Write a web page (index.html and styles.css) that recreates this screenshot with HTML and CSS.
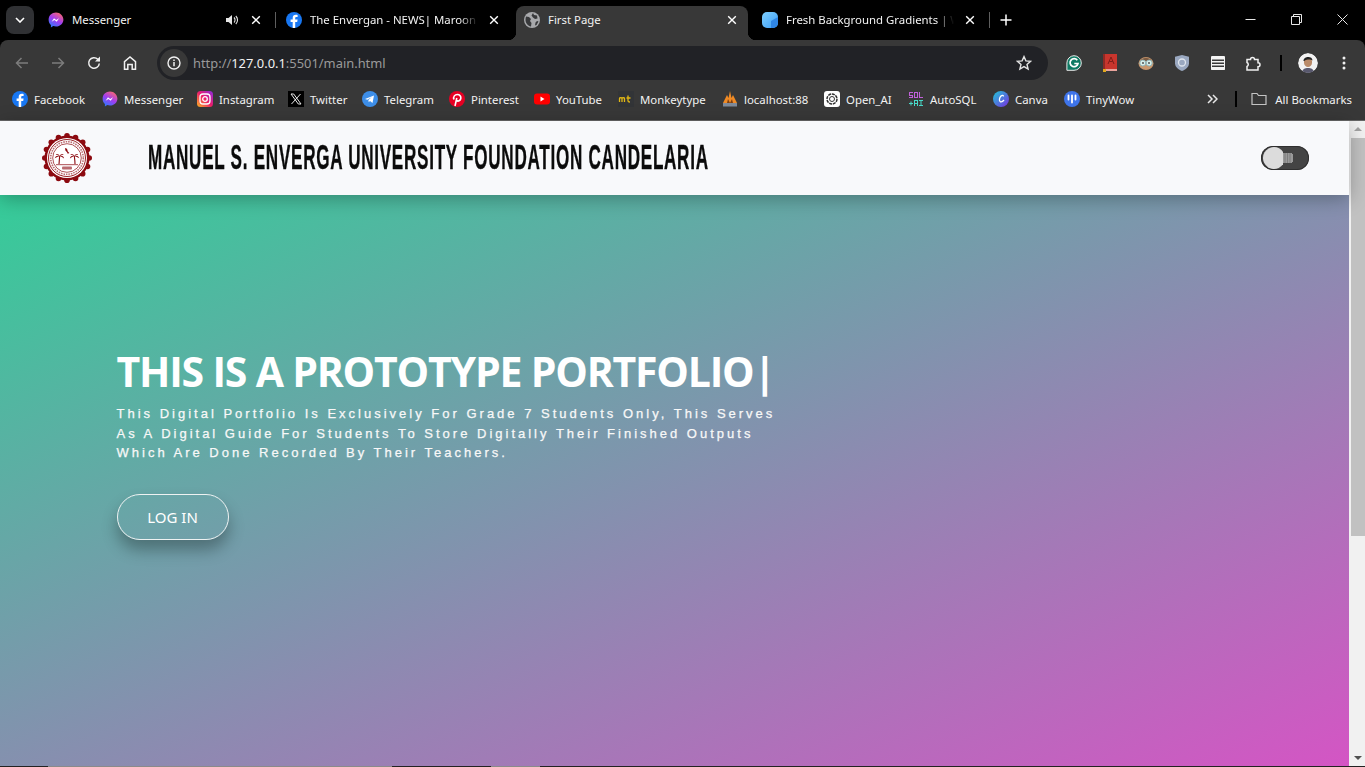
FILE: index.html
```html
<!DOCTYPE html>
<html lang="en">
<head>
<meta charset="utf-8">
<title>First Page</title>
<link rel="stylesheet" href="styles.css">
</head>
<body>
<svg class="defs" width="0" height="0" aria-hidden="true">
  <defs>
    <linearGradient id="mg" x1="0.2" y1="1" x2="0.8" y2="0"><stop offset="0" stop-color="#2b7bff"/><stop offset=".5" stop-color="#a13cf0"/><stop offset="1" stop-color="#ff6a6a"/></linearGradient>
    <linearGradient id="ig" x1="0" y1="1" x2="1" y2="0"><stop offset="0" stop-color="#fdb722"/><stop offset=".5" stop-color="#ec1c6a"/><stop offset="1" stop-color="#8a2be2"/></linearGradient>
    <linearGradient id="cg" x1="0" y1="0" x2="1" y2="1"><stop offset="0" stop-color="#1fc8d8"/><stop offset="1" stop-color="#7a2ee0"/></linearGradient>
    <linearGradient id="fg" x1="0" y1="0" x2="1" y2="1"><stop offset="0" stop-color="#7fd0ff"/><stop offset="1" stop-color="#3b9cf5"/></linearGradient>
    <symbol id="fb" viewBox="0 0 16 16"><circle cx="8" cy="8" r="8" fill="#1877f2"/><path d="M9.200 16V10h2l.4-2.400H9.200V6.200c0-.7.3-1.200 1.300-1.200h1.100V3c-.4-.1-1.100-.2-1.800-.2-1.900 0-3.100 1.100-3.100 3.100v1.700H4.600V10h2.100v6z" fill="#fff"/></symbol>
    <symbol id="ms" viewBox="0 0 16 16"><path d="M8 .6C3.800.6.600 3.700.600 7.700c0 2.100.9 3.900 2.300 5.200v2.500l2.300-1.300c.9.300 1.800.4 2.800.4 4.200 0 7.400-3.100 7.400-6.800S12.200.6 8 .6z" fill="url(#mg)"/><path d="M3.600 9.800 6 6.200l2.200 1.700 2.900-1.700-2.400 3.600-2.200-1.700z" fill="#fff"/></symbol>
  </defs>
</svg>

<div class="tabstrip">
  <button class="tabmenu"><svg width="10" height="6" viewBox="0 0 10 6"><path d="M1 1l4 4 4-4" fill="none" stroke="#fff" stroke-width="1.600"/></svg></button>
  <div class="tabs">
    <div class="tab">
      <svg class="fav"><use href="#ms"/></svg>
      <span class="tab-title">Messenger</span>
      <svg class="speaker" width="14" height="14" viewBox="0 0 14 14"><path d="M1 5h2.500L7 2v10L3.500 9H1z" fill="#e6e6e6"/><path d="M9 4.500a3.500 3.500 0 0 1 0 5M10.800 3a5.500 5.500 0 0 1 0 8" fill="none" stroke="#e6e6e6" stroke-width="1.100"/></svg>
      <svg class="close" width="10" height="10" viewBox="0 0 10 10"><path d="M1.200 1.200l7.600 7.600M8.800 1.200L1.200 8.800" stroke="#fff" stroke-width="1.400"/></svg>
    </div>
    <div class="tab tab-sep">
      <svg class="fav"><use href="#fb"/></svg>
      <span class="tab-title fade">The Envergan - NEWS| Maroon</span>
      <svg class="close" width="10" height="10" viewBox="0 0 10 10"><path d="M1.200 1.200l7.600 7.600M8.800 1.200L1.200 8.800" stroke="#fff" stroke-width="1.400"/></svg>
    </div>
    <div class="tab active">
      <svg class="fav" viewBox="0 0 16 16"><circle cx="8" cy="8" r="8" fill="#a8a9ac"/><path d="M2 4.500l3 .5 2 2-1 2 1.500 2-.5 3.500C4 14 1.500 11 1.500 8c0-1.300.2-2.500.5-3.500zM9 1l1 2 3 .5.500 3-2.500.5-2-1.500-1.500-2zM13 9l1.500.5-2 3.500-1.500.5.500-3z" fill="#38393b"/></svg>
      <span class="tab-title">First Page</span>
      <svg class="close" width="10" height="10" viewBox="0 0 10 10"><path d="M1.200 1.200l7.600 7.600M8.800 1.200L1.200 8.800" stroke="#fff" stroke-width="1.400"/></svg>
    </div>
    <div class="tab">
      <svg class="fav" viewBox="0 0 16 16"><path d="M5 0h6a5 5 0 0 1 5 5v6a5 5 0 0 1-5 5H5a5 5 0 0 1-5-5V5a5 5 0 0 1 5-5z" fill="url(#fg)"/><path d="M16 5v6a5 5 0 0 1-5 5H9V9z" fill="#2f86e6"/></svg>
      <span class="tab-title fade">Fresh Background Gradients | W</span>
      <svg class="close" width="10" height="10" viewBox="0 0 10 10"><path d="M1.200 1.200l7.600 7.600M8.800 1.200L1.200 8.800" stroke="#fff" stroke-width="1.400"/></svg>
    </div>
  </div>
  <span class="strip-sep"></span>
  <svg class="newtab" width="12" height="12" viewBox="0 0 12 12"><path d="M6 .5v11M.5 6h11" stroke="#fff" stroke-width="1.500"/></svg>
  <div class="winctl">
    <svg viewBox="0 0 11 11"><path d="M.5 5.500h10" stroke="#e8e8e8"/></svg>
    <svg viewBox="0 0 11 11"><path d="M.5 2.500h8v8h-8zM2.500 2.500v-2h8v8h-2" fill="none" stroke="#e8e8e8"/></svg>
    <svg viewBox="0 0 11 11"><path d="M.5.500l10 10M10.500.500l-10 10" stroke="#e8e8e8"/></svg>
  </div>
</div>

<div class="toolbar">
  <span class="tbtn"><svg width="16" height="16" viewBox="0 0 16 16"><path d="M14 8H2.500M7.500 3l-5 5 5 5" fill="none" stroke="#7c7c7c" stroke-width="1.500"/></svg></span>
  <span class="tbtn"><svg width="16" height="16" viewBox="0 0 16 16"><path d="M2 8h11.500M8.500 3l5 5-5 5" fill="none" stroke="#7c7c7c" stroke-width="1.500"/></svg></span>
  <span class="tbtn"><svg width="16" height="16" viewBox="0 0 16 16"><path d="M13.300 8.500a5.300 5.300 0 1 1-1.500-4.200L13.500 6" fill="none" stroke="#f0f0f0" stroke-width="1.500"/><path d="M14 1.500V6.500H9z" fill="#f0f0f0"/></svg></span>
  <span class="tbtn"><svg width="16" height="16" viewBox="0 0 16 16"><path d="M2.500 14.300V6.700L8 2l5.500 4.700v7.600h-3.300V9.500H5.800v4.800z" fill="none" stroke="#f0f0f0" stroke-width="1.500"/></svg></span>
  <div class="omnibox">
    <span class="info"><svg width="14" height="14" viewBox="0 0 14 14"><circle cx="7" cy="7" r="6" fill="none" stroke="#f0f0f0" stroke-width="1.400"/><path d="M7 6v4.200M7 3.500v1.400" stroke="#f0f0f0" stroke-width="1.500"/></svg></span>
    <span class="url"><span class="dim">http://</span>127.0.0.1<span class="dim">:5501/main.html</span></span>
    <svg class="star" width="16" height="16" viewBox="0 0 16 16"><path d="M8 1.600l1.900 4.300 4.700.4-3.600 3.100 1.100 4.600L8 11.600l-4.100 2.400L5 9.400 1.400 6.300l4.700-.4z" fill="none" stroke="#e4e4e4" stroke-width="1.400"/></svg>
  </div>
  <span class="tbtn"><svg width="16" height="16" viewBox="0 0 16 16"><path d="M8 .7a7.300 7.300 0 1 1 0 14.600H.9v-7.300A7.300 7.300 0 0 1 8 .7z" fill="#0f7a63" stroke="#e8e8e8"/><path d="M11.300 5.300A4 4 0 1 0 12 8.500H8.300" fill="none" stroke="#fff" stroke-width="1.700"/></svg></span>
  <span class="tbtn"><svg width="14" height="18" viewBox="0 0 14 18"><path d="M2 0h12v15H2z" fill="#c8352d"/><path d="M2 15h12v2H2z" fill="#e9a39c"/><path d="M0 0h2v17H0z" fill="#8e2a25"/><path d="M5 10l3-7 3 7M6.300 7.500h3.400" fill="none" stroke="#7e1d18"/><path d="M0 15h3v3H0z" fill="#e0a81e"/></svg></span>
  <span class="tbtn"><svg width="16" height="16" viewBox="0 0 16 16"><ellipse cx="8" cy="8.500" rx="7.500" ry="6.500" fill="#c9976c"/><path d="M2 5.500Q8 0 14 5.500L8 6z" fill="#7a5a42"/><circle cx="4.800" cy="8" r="3" fill="#d8efe9" stroke="#8fb4b8"/><circle cx="11.200" cy="8" r="3" fill="#d8efe9" stroke="#8fb4b8"/><circle cx="5" cy="8" r=".9" fill="#444"/><circle cx="11" cy="8" r=".9" fill="#444"/></svg></span>
  <span class="tbtn"><svg width="14" height="16" viewBox="0 0 14 16"><path d="M7 0l7 1.800v6.400C14 12 10.500 14.600 7 16 3.500 14.600 0 12 0 8.200V1.800z" fill="#9aa8c0"/><circle cx="7" cy="7.500" r="3.500" fill="none" stroke="#dfe5ee" stroke-width="1.300"/></svg></span>
  <span class="tbtn"><svg width="14" height="14" viewBox="0 0 14 14"><path d="M.5.500h13v13H.5z" fill="none" stroke="#f4f4f4"/><path d="M0 1h14v2.500H0zM0 5h14v1.500H0zM0 8h14v1.500H0zM0 11h14v2.500H0z" fill="#f4f4f4"/></svg></span>
  <span class="tbtn"><svg width="16" height="16" viewBox="0 0 16 16"><path d="M1 4.500h3.500a2 2 0 0 1 4 0H12v3.200a2 2 0 0 1 0 4V15H1v-3.500a2.200 2.200 0 0 0 0-4z" fill="none" stroke="#f0f0f0" stroke-width="1.500"/></svg></span>
  <span class="tb-sep"></span>
  <span class="tbtn"><svg class="avatar" width="20" height="20" viewBox="0 0 20 20"><circle cx="10" cy="10" r="10" fill="#f2f2f2"/><path d="M6 8c0-4 8-4 8 0v2c0 2-2 4-4 4s-4-2-4-4z" fill="#b98a68"/><path d="M5.500 8c0-5 9-5.500 9-.5-2-1.500-6-1-7.500 0-.5.500-1 .500-1.500.500z" fill="#222"/><path d="M4 20c0-4 3-5 6-5s6 1 6 5z" fill="#59596e"/></svg></span>
  <span class="tbtn"><svg width="4" height="14" viewBox="0 0 4 14"><circle cx="2" cy="2" r="1.500" fill="#f0f0f0"/><circle cx="2" cy="7" r="1.500" fill="#f0f0f0"/><circle cx="2" cy="12" r="1.500" fill="#f0f0f0"/></svg></span>
</div>

<div class="bookmarks">
  <div class="bm-grid">
    <span class="bm"><svg class="fav"><use href="#fb"/></svg>Facebook</span>
    <span class="bm"><svg class="fav"><use href="#ms"/></svg>Messenger</span>
    <span class="bm"><svg class="fav" viewBox="0 0 16 16"><rect width="16" height="16" rx="3.500" fill="url(#ig)"/><rect x="3" y="3" width="10" height="10" rx="3" fill="none" stroke="#fff" stroke-width="1.300"/><circle cx="8" cy="8" r="2.300" fill="none" stroke="#fff" stroke-width="1.300"/></svg>Instagram</span>
    <span class="bm"><svg class="fav" viewBox="0 0 16 16"><rect width="16" height="16" fill="#000"/><path d="M3 3h2.700l7.300 10h-2.700zM12.500 3L3.500 13" fill="none" stroke="#e8e8e8"/></svg>Twitter</span>
    <span class="bm"><svg class="fav" viewBox="0 0 16 16"><circle cx="8" cy="8" r="8" fill="#3d8ee8"/><path d="M3 8l9-3.500-1.500 7.500-2.500-2-1.300 1.300-.3-2.300 3.500-3-4.500 2.700z" fill="#fff"/></svg>Telegram</span>
    <span class="bm"><svg class="fav" viewBox="0 0 16 16"><circle cx="8" cy="8" r="8" fill="#e60023"/><path d="M6 15l1.800-8M5 8.500C3.800 5.500 6 3.500 8.300 3.500c2.500 0 3.900 1.800 3.500 4-.4 2.200-2.700 3.400-4.300 1.900" fill="none" stroke="#fff" stroke-width="1.600"/></svg>Pinterest</span>
    <span class="bm"><svg class="fav" viewBox="0 0 16 16"><rect y="2.500" width="16" height="11" rx="3" fill="#f00"/><path d="M6.500 5.500l4 2.500-4 2.500z" fill="#fff"/></svg>YouTube</span>
    <span class="bm"><svg class="fav" viewBox="0 0 16 16"><rect width="16" height="16" fill="#323437"/><path d="M1.500 11V7.500c0-1 2.500-1 2.500 0V11M4 7.500c0-1 2.500-1 2.500 0V11M10 4.500V10c0 .8.500 1 2 1M8.500 7h4" fill="none" stroke="#e2b714" stroke-width="1.300"/></svg>Monkeytype</span>
    <span class="bm"><svg class="fav" viewBox="0 0 16 16"><path d="M1 12L5 4l1.500 3L8 0l1.500 7L11 4l4 8z" fill="#f08a24"/><path d="M5 12l1-4 2 4 2-4 1 4z" fill="#7a3d10"/><path d="M1 12h14v3.500H1z" fill="#7e8a9a"/></svg>localhost:88</span>
    <span class="bm"><svg class="fav" viewBox="0 0 16 16"><rect width="16" height="16" rx="3" fill="#fff"/><circle cx="8" cy="8" r="5" fill="none" stroke="#333" stroke-width="1.500" stroke-dasharray="3 .8"/><circle cx="8" cy="8" r="2.500" fill="none" stroke="#333"/></svg>Open_AI</span>
    <span class="bm"><svg class="fav" viewBox="0 0 16 16"><path d="M1 1h4v1H2v2h3v3H1V6h3V5H1zM6 1h4v6H6zM7 2v4h2V2zM11 1h1v5h3v1h-4z" fill="#c060d8"/><path d="M6 9h4v6H9v-2H7v2H6zM7 10v2h2v-2zM11 9h4v1h-1.500v4H15v1h-4v-1h1.500v-4H11zM1 12h4v1H1zM2.500 10.500h1v4h-1z" fill="#48d8c8"/></svg>AutoSQL</span>
    <span class="bm"><svg class="fav" viewBox="0 0 16 16"><circle cx="8" cy="8" r="8" fill="url(#cg)"/><path d="M10.500 5.500C10.500 4 9 4 8 5c-1.500 1.500-2.500 5-.5 5.800 1.200.4 2.500-.5 3.500-1.800" fill="none" stroke="#fff" stroke-width="1.300"/></svg>Canva</span>
    <span class="bm"><svg class="fav" viewBox="0 0 16 16"><circle cx="8" cy="8" r="8" fill="#3e74ea"/><path d="M4.500 4.500v4M8 4.500v7M11.500 4.500v4" stroke="#fff" stroke-width="1.800" stroke-linecap="round"/></svg>TinyWow</span>
  </div>
  <svg class="chev" width="11" height="10" viewBox="0 0 11 10"><path d="M1 1l4 4-4 4M6 1l4 4-4 4" fill="none" stroke="#e8e8e8" stroke-width="1.500"/></svg>
  <span class="bm-sep"></span>
  <span class="bm bm-all"><svg class="fav" viewBox="0 0 16 16"><path d="M1 13.500v-11h5l1.500 2h7.500v9z" fill="none" stroke="#c4c4c4" stroke-width="1.200"/></svg>All Bookmarks</span>
</div>

<div class="viewport">
  <main class="page">
    <header class="site-header">
      <svg class="seal" width="52" height="52" viewBox="0 0 52 52">
        <g fill="#8c0a10"><circle cx="26" cy="26" r="22.500"/><circle cx="26" cy="3.800" r="2.800"/><circle cx="34.500" cy="5.500" r="2.800"/><circle cx="41.700" cy="10.300" r="2.800"/><circle cx="46.500" cy="17.500" r="2.800"/><circle cx="48.200" cy="26" r="2.800"/><circle cx="46.500" cy="34.500" r="2.800"/><circle cx="41.700" cy="41.700" r="2.800"/><circle cx="34.500" cy="46.500" r="2.800"/><circle cx="26" cy="48.200" r="2.800"/><circle cx="17.500" cy="46.500" r="2.800"/><circle cx="10.300" cy="41.700" r="2.800"/><circle cx="5.500" cy="34.500" r="2.800"/><circle cx="3.800" cy="26" r="2.800"/><circle cx="5.500" cy="17.500" r="2.800"/><circle cx="10.300" cy="10.300" r="2.800"/><circle cx="17.500" cy="5.500" r="2.800"/></g>
        <circle cx="26" cy="26" r="20" fill="#fff"/>
        <circle cx="26" cy="26" r="18.500" fill="none" stroke="#8c0a10" stroke-width=".9"/>
        <circle cx="26" cy="26" r="16.300" fill="none" stroke="#8c0a10" stroke-width="1.600" stroke-dasharray="1.500 1" opacity=".6"/>
        <circle cx="26" cy="26" r="14.300" fill="none" stroke="#8c0a10" stroke-width=".7"/>
        <g fill="none" stroke="#8c0a10" stroke-width="1.100"><path d="M18 32c.3-3 .3-5 .7-8M34 32c0-3-.3-5-.7-8"/></g>
        <g fill="#8c0a10"><path d="M18.700 24c-2.500-.8-4-.2-5 2.200 1.600-.8 3.200-1.400 5-2.200zM18.700 24c2.500-.8 3.900.4 4.400 2.400-1.500-1-2.800-1.600-4.400-2.400zM18.700 24c-.8-1.600-2.400-2.400-4-1.600 1.500 0 2.800.8 4 1.600zM18.700 24c.8-1.600 2.400-2.400 4-1.600-1.500 0-2.800.8-4 1.600z"/><path d="M33.300 24c-2.500-.8-3.900.4-4.400 2.400 1.500-1 2.800-1.600 4.400-2.400zM33.300 24c2.500-.8 4-.2 5 2.200-1.600-.8-3.200-1.400-5-2.200zM33.300 24c-.8-1.600-2.400-2.400-4-1.600 1.500 0 2.800.8 4 1.600zM33.300 24c.8-1.600 2.400-2.400 4-1.600-1.500 0-2.800.8-4 1.600z"/><path d="M24 16l2 .8.8 2.600 1.600 1.600-1.600.8-.8-1.600-1.600-1.600z"/><path d="M15 32h22v1.200H15z" opacity=".6"/><rect x="21" y="34.500" width="10" height="3" rx="1" opacity=".6"/></g>
      </svg>
      <h2 class="site-name">MANUEL S. ENVERGA UNIVERSITY FOUNDATION CANDELARIA</h2>
      <span class="theme-toggle">
        <svg class="bulb" width="31" height="22" viewBox="0 0 31 22"><path d="M11 0a11 11 0 0 1 9 4.700V17.300A11 11 0 1 1 11 0z" fill="#dcdcdc"/><path d="M20 6h9v1h1v8h-1v1h-9z" fill="#9a9a9a"/><path d="M22 6v10M24.500 6v10M27 6v10" stroke="#777" stroke-width=".8"/></svg>
      </span>
    </header>
    <section class="hero">
      <h1 class="hero-title">THIS IS A PROTOTYPE PORTFOLIO|</h1>
      <p class="hero-text">This Digital Portfolio Is Exclusively For Grade 7 Students Only, This Serves As A Digital Guide For Students To Store Digitally Their Finished Outputs Which Are Done Recorded By Their Teachers.</p>
      <a class="login" href="#">LOG IN</a>
    </section>
  </main>
  <div class="scrollbar">
    <span class="sb-up"></span>
    <span class="sb-thumb"></span>
    <span class="sb-space"></span>
    <span class="sb-down"></span>
  </div>
</div>
<div class="bottom-edge"><span class="edge-a"></span><span class="edge-b"></span></div>
</body>
</html>
```
FILE: styles.css
```css
* { box-sizing: border-box; }
html, body { margin: 0; height: 100%; }
body {
  width: 1365px;
  height: 767px;
  overflow: hidden;
  background: #000;
  font-family: "Noto Sans", "Open Sans", sans-serif;
  display: flex;
  flex-direction: column;
}
.defs { position: absolute; }
.fav { width: 16px; height: 16px; flex: none; display: block; }

/* tab strip */
.tabstrip { height: 40px; flex: none; background: #000; display: flex; align-items: flex-start; padding-left: 6px; color: #fff; }
.tabmenu { width: 28px; height: 28px; margin-top: 6px; border: 0; padding: 0; border-radius: 8px; background: #303134; display: flex; align-items: center; justify-content: center; }
.tabs { display: flex; gap: 6px; margin-left: 6px; margin-top: 6px; }
.tab { width: 232px; height: 34px; padding: 0 11px 6px 8px; display: flex; align-items: center; gap: 8px; position: relative; font-size: 11.400px; color: #f2f2f2; }
.tab-title { flex: 1; white-space: nowrap; line-height: 16px; min-width: 0; }
.fade { -webkit-mask-image: linear-gradient(to right, #000 150px, transparent 168px); mask-image: linear-gradient(to right, #000 150px, transparent 168px); }
.close { flex: none; }
.speaker { flex: none; margin-right: 4px; }
.tab-sep::before { content: ""; position: absolute; left: -3px; top: 6px; width: 1px; height: 16px; background: #5f5f5f; }
.active { background: #383838; border-radius: 8px 8px 0 0; }
.active::before, .active::after { content: ""; position: absolute; bottom: 0; width: 8px; height: 8px; }
.active::before { left: -8px; background: radial-gradient(circle at 0 0, #000 8px, #383838 8.500px); }
.active::after { right: -8px; background: radial-gradient(circle at 100% 0, #000 8px, #383838 8.500px); }
.strip-sep { width: 1px; height: 16px; margin: 12px 0 0 3px; background: #5f5f5f; flex: none; }
.newtab { margin: 14px 0 0 10px; flex: none; }
.winctl { margin-left: auto; display: flex; height: 40px; }
.winctl svg { width: 46px; height: 40px; padding: 14px 17px 15px 18px; flex: none; }

/* toolbar */
.toolbar { height: 46px; flex: none; background: #383838; border-radius: 8px 8px 0 0; display: flex; align-items: center; padding: 0 3px 0 4px; }
.tbtn { width: 36px; height: 34px; flex: none; display: flex; align-items: center; justify-content: center; }
.omnibox { flex: 1; height: 34px; margin: 0 8px 0 9px; border-radius: 17px; background: #212226; display: flex; align-items: center; padding: 0 16px 0 3px; font-size: 12.900px; color: #f2f2f2; }
.info { width: 28px; height: 28px; border-radius: 50%; background: #383838; display: flex; align-items: center; justify-content: center; margin-right: 5px; flex: none; }
.url { flex: 1; white-space: nowrap; }
.dim { color: #9a9a9a; }
.tb-sep { width: 2px; height: 16px; background: #000; margin: 0 8px; flex: none; }
.avatar { border-radius: 50%; }

/* bookmarks */
.bookmarks { height: 35px; flex: none; background: #383838; border-bottom: 1px solid #666; display: flex; align-items: center; padding: 0 13px 8px 12px; font-size: 11.400px; color: #f2f2f2; }
.bm-grid { display: grid; grid-template-columns: 90px 95px 91px 74px 87px 85px 84px 104px 102px 84px 85px 71px 80px; }
.bm { display: flex; align-items: center; gap: 6px; white-space: nowrap; height: 16px; }
.chev { margin-left: 63px; flex: none; }
.bm-sep { width: 2px; height: 16px; background: #000; margin-left: 17px; flex: none; }
.bm-all { margin-left: auto; gap: 8px; }

/* page */
.viewport { flex: 1; display: flex; min-height: 0; background: #f1f1f1; }
.page { flex: 1; display: flex; flex-direction: column; min-width: 0; }
.site-header { height: 74px; flex: none; position: relative; z-index: 1; background: #f8f9fb; box-shadow: 0 4px 18px rgba(0, 0, 0, .28); display: flex; align-items: center; padding: 0 40px 0 41px; }
.seal { flex: none; }
.site-name { flex: none; width: 600px; margin: 0 0 3px 55px; font-family: "Liberation Sans", sans-serif; font-weight: 700; font-size: 35px; color: #0b0b0b; white-space: nowrap; letter-spacing: 1.500px; transform: scaleX(.488); transform-origin: left center; -webkit-text-stroke: .4px #0b0b0b; }
.theme-toggle { margin-left: auto; width: 48px; height: 24px; border-radius: 12px; background: #444; box-shadow: inset 0 0 0 1px #2f2f2f; display: flex; align-items: center; padding-left: 2px; flex: none; }
.bulb { display: block; }
.hero { flex: 1; min-height: 0; padding: 148px 0 0 116.500px; color: #fff; background: linear-gradient(to bottom right, #35cc99, #d455c4); }
.hero-title { margin: 0 0 5px; font-family: "Open Sans", "Noto Sans", sans-serif; font-weight: 700; font-size: 41px; letter-spacing: -1.200px; line-height: 56px; white-space: nowrap; }
.hero-text { margin: 0; width: 670px; font-family: "Liberation Sans", sans-serif; font-size: 13px; line-height: 19.500px; letter-spacing: 3px; color: #f8f8f8; -webkit-text-stroke: .25px #f8f8f8; }
.login { margin-top: 31px; width: 112px; height: 46px; border: 1px solid #eef2f2; border-radius: 23px; display: flex; align-items: center; justify-content: center; color: #fff; text-decoration: none; font-size: 15px; box-shadow: 0 10px 16px rgba(0, 0, 0, .3); }

/* scrollbar */
.scrollbar { width: 16px; flex: none; background: #f1f1f1; display: flex; flex-direction: column; align-items: flex-end; }
.sb-up, .sb-down { height: 17px; width: 14px; flex: none; position: relative; }
.sb-up::before, .sb-down::before { content: ""; position: absolute; left: 3px; width: 0; height: 0; border-left: 4px solid transparent; border-right: 4px solid transparent; }
.sb-up::before { top: 6px; border-bottom: 4px solid #a3a3a3; }
.sb-down::before { bottom: 6px; border-top: 4px solid #505050; }
.sb-thumb { width: 14px; height: 398px; background: #c1c1c1; flex: none; }
.sb-space { flex: 1; }

.bottom-edge { height: 1px; flex: none; background: #222; display: flex; padding-left: 48px; }
.edge-a { width: 344px; background: #8a8a8a; }
.edge-b { width: 49px; margin-left: 99px; background: #8a8a8a; }
```
